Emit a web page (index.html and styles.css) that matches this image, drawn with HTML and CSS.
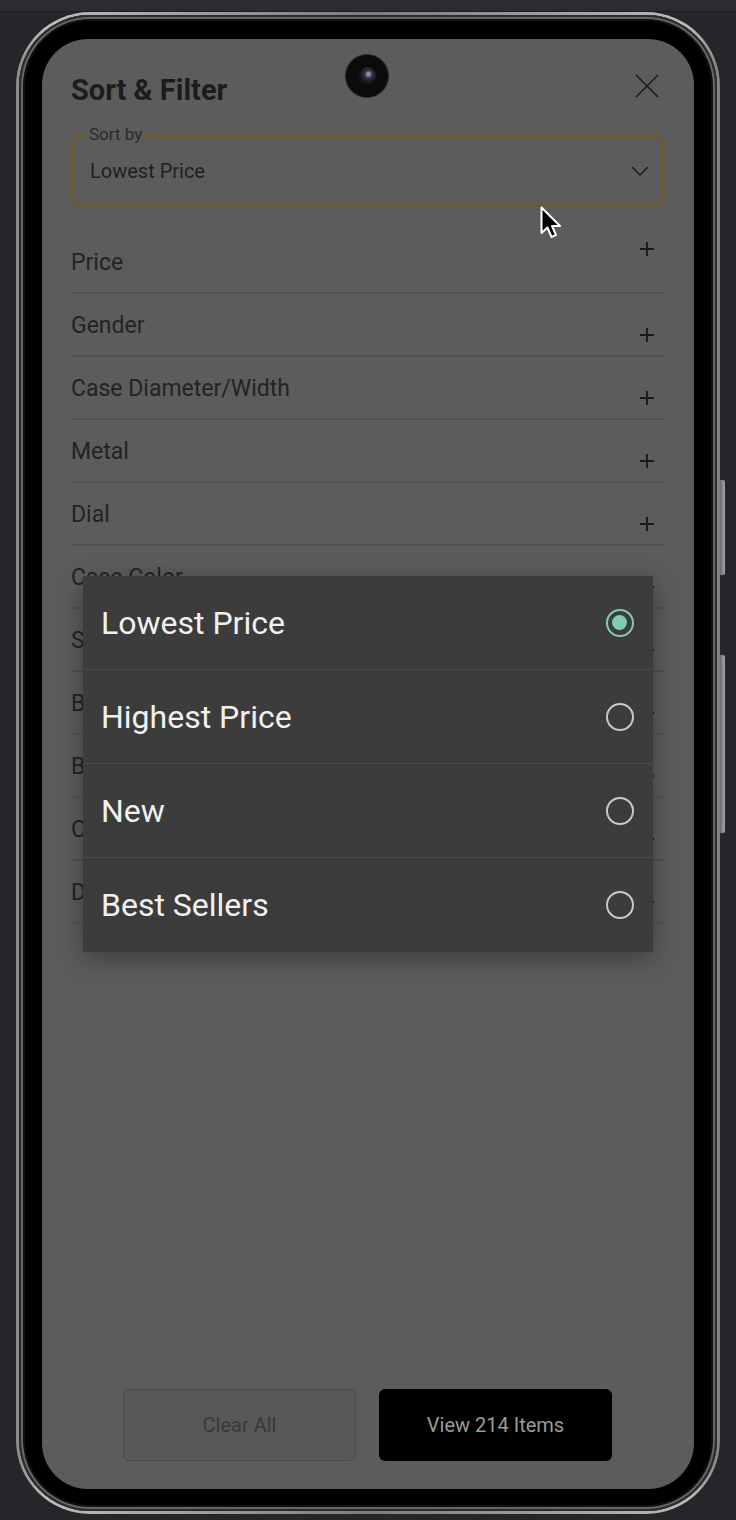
FILE: index.html
```html
<!DOCTYPE html>
<html lang="en">
  <head>
    <meta charset="UTF-8" />
    <meta name="viewport" content="width=device-width, initial-scale=1.0" />
    <title>Sort &amp; Filter</title>
    <link rel="stylesheet" href="styles.css">
  </head>
  <body>
    <div class="phone">
      <div class="bezel">
        <div class="screen">
          <div class="camera"><span class="lens"></span></div>

          <div class="header">
            <h1>Sort &amp; Filter</h1>
            <svg class="close" width="24" height="24" viewBox="0 0 24 24">
              <path d="M1 1 L23 23 M23 1 L1 23" stroke="#1c1c1c" stroke-width="1.6" fill="none" />
            </svg>
          </div>

          <div class="sort-field">
            <span class="sort-label">Sort by</span>
            <span class="sort-value">Lowest Price</span>
            <svg class="chevron" width="18" height="10" viewBox="0 0 18 10">
              <path d="M1 1 L9 9 L17 1" stroke="#1c1c1c" stroke-width="1.5" fill="none" />
            </svg>
          </div>

          <div class="filters">
            <div class="row first"><span>Price</span><i class="plus"></i></div>
            <div class="row"><span>Gender</span><i class="plus"></i></div>
            <div class="row"><span>Case Diameter/Width</span><i class="plus"></i></div>
            <div class="row"><span>Metal</span><i class="plus"></i></div>
            <div class="row"><span>Dial</span><i class="plus"></i></div>
            <div class="row"><span>Case Color</span><i class="plus"></i></div>
            <div class="row"><span>Strap Material</span><i class="plus"></i></div>
            <div class="row"><span>Bracelet</span><i class="plus"></i></div>
            <div class="row"><span>Brand</span><i class="plus"></i></div>
            <div class="row"><span>Collection</span><i class="plus"></i></div>
            <div class="row"><span>Discount</span><i class="plus"></i></div>
          </div>

          <div class="footer">
            <div class="btn btn-clear">Clear All</div>
            <div class="btn btn-view">View 214 Items</div>
          </div>

          <!-- dropdown opened from "Sort by" -->
          <div class="menu">
            <div class="option"><span>Lowest Price</span><i class="radio checked"></i></div>
            <div class="option"><span>Highest Price</span><i class="radio"></i></div>
            <div class="option"><span>New</span><i class="radio"></i></div>
            <div class="option"><span>Best Sellers</span><i class="radio"></i></div>
          </div>
        </div>
      </div>
      <i class="side-btn side-btn-a"></i>
      <i class="side-btn side-btn-b"></i>
    </div>

    <svg class="cursor" width="24" height="36" viewBox="0 0 24 36">
      <path d="M1.5 1.5 L1.5 27 L7.5 21.5 L11.5 31 L16 29 L12 20 L20 20 Z" fill="#000" stroke="#fff" stroke-width="2" stroke-linejoin="round" />
    </svg>
  </body>
</html>
```

FILE: styles.css
```css
* {
  margin: 0;
  padding: 0;
  box-sizing: border-box;
}
body {
  position: relative;
  width: 736px;
  height: 1520px;
  padding-top: 12px;
  background: #24262a;
  box-shadow: inset 0 11px 0 #2a2c2f, inset 0 12px 0 #1c1e20;
  font-family: Roboto, "Liberation Sans", sans-serif;
  overflow: hidden;
}
.phone {
  position: relative;
  width: 704px;
  height: 1502px;
  margin: 0 auto;
  padding: 3px;
  border-radius: 74px;
  background: linear-gradient(90deg, #8a8a8a, #bdbdbd 4%, #7c7c7c 50%, #bababa 96%, #808080);
}
.bezel {
  height: 100%;
  padding: 24px 23px 22px;
  border-radius: 71px;
  background: #000;
  box-shadow: inset 0 0 0 2px #2b2b2b, inset 0 0 0 4px #666, inset 0 0 0 6px #111;
}
.screen {
  position: relative;
  display: flex;
  flex-direction: column;
  height: 100%;
  padding: 0 30px 28px 29px;
  border-radius: 46px;
  background: #5c5c5c;
  overflow: hidden;
}
.camera {
  position: absolute;
  left: 304px;
  top: 16px;
  width: 42px;
  height: 42px;
  border-radius: 50%;
  background: #0b0b0b;
  box-shadow: 0 0 0 1px #2a2a2a;
  display: flex;
  align-items: center;
  justify-content: center;
}
.lens {
  width: 18px;
  height: 18px;
  border-radius: 50%;
  background: radial-gradient(circle at 58% 40%, #8a8fa6 0 1.5px, #2e3146 4px, #121319 9px);
}
.header {
  display: flex;
  justify-content: space-between;
  align-items: center;
  padding-top: 34px;
}
h1 {
  font-size: 29px;
  line-height: 34px;
  font-weight: 700;
  color: #1c1c1c;
}
.close {
  margin: 0 5px 8px 0;
}
.sort-field {
  position: relative;
  display: flex;
  align-items: center;
  justify-content: space-between;
  height: 71px;
  margin-top: 28px;
  margin-left: 1px;
  padding: 0 13px 0 16px;
  border: 2px solid #765918;
  border-radius: 7px;
}
.sort-label {
  position: absolute;
  left: 11px;
  top: -13px;
  padding: 0 4px;
  font-size: 17px;
  line-height: 20px;
  color: #2b2b2b;
  background: #5c5c5c;
}
.sort-value {
  font-size: 20px;
  color: #1f1f1f;
}
.filters {
  margin-top: 25px;
}
.row {
  display: flex;
  justify-content: space-between;
  align-items: flex-start;
  height: 63px;
  border-bottom: 2px solid #525252;
}
.row span {
  margin-top: 18px;
  font-size: 23px;
  line-height: 28px;
  color: #232323;
}
.plus {
  position: relative;
  width: 14px;
  height: 14px;
  margin: 34px 10px 0 0;
}
.row.first .plus {
  margin-top: 11px;
}
.plus::before,
.plus::after {
  content: "";
  position: absolute;
  background: #1c1c1c;
}
.plus::before {
  left: 0;
  top: 6px;
  width: 14px;
  height: 1.5px;
}
.plus::after {
  left: 6.25px;
  top: 0;
  width: 1.5px;
  height: 14px;
}
.footer {
  display: flex;
  justify-content: center;
  gap: 23px;
  margin-top: auto;
}
.btn {
  width: 233px;
  height: 72px;
  line-height: 72px;
  text-align: center;
  font-size: 20px;
  border-radius: 6px;
}
.btn-clear {
  color: #393939;
  background: #585858;
  border: 1px solid #4b4b4b;
  line-height: 70px;
}
.btn-view {
  color: #9b9b9b;
  background: #000;
}
.menu {
  position: absolute;
  left: 41px;
  top: 537px;
  width: 570px;
  background: #3c3c3c;
  box-shadow: 0 6px 24px rgba(0, 0, 0, 0.35);
}
.option {
  display: flex;
  justify-content: space-between;
  align-items: center;
  height: 94px;
  padding: 0 19px 0 18px;
  border-bottom: 1px solid #4c4c4c;
}
.option:last-child {
  border-bottom: 0;
  height: 94px;
}
.option span {
  font-size: 32px;
  color: #f1f1f1;
}
.radio {
  position: relative;
  width: 28px;
  height: 28px;
  border-radius: 50%;
  border: 2.5px solid #c9c9c9;
}
.radio.checked {
  border-color: #7dcdb5;
}
.radio.checked::after {
  content: "";
  position: absolute;
  left: 4px;
  top: 4px;
  width: 15px;
  height: 15px;
  border-radius: 50%;
  background: #7dcdb5;
}
.side-btn {
  position: absolute;
  right: -5px;
  width: 5px;
  border-radius: 0 2px 2px 0;
  background: linear-gradient(90deg, #6a6a6a, #a8a8a8);
}
.side-btn-a {
  top: 468px;
  height: 95px;
}
.side-btn-b {
  top: 643px;
  height: 178px;
}
.cursor {
  position: absolute;
  left: 540px;
  top: 206px;
}
```
